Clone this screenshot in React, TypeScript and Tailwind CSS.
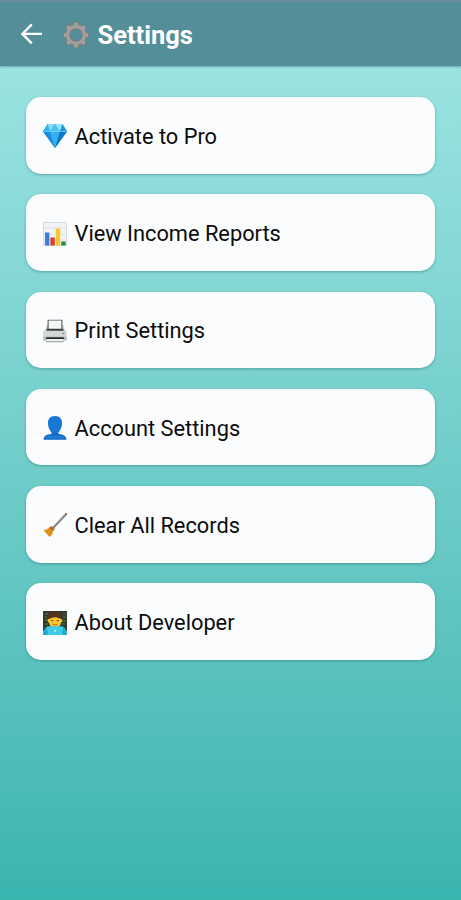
import type { ReactNode } from "react";

function BackArrow() {
  return (
    <svg className="h-6 w-6" viewBox="0 0 24 24" fill="none" stroke="#fff" strokeWidth="2.4">
      <path d="M22 10.900H2.800M11.800 1.400L2.400 10.900l9.400 9.400" />
    </svg>
  );
}

const teeth = [0, 45, 90, 135, 180, 225, 270, 315];

function GearIcon() {
  return (
    <svg className="h-7 w-7" viewBox="0 0 28 28">
      <g fill="#77787a">
        {teeth.map((deg) => (
          <path key={deg} d="M10.700 6l.9-5.200h4.800l.9 5.200z" transform={`rotate(${deg} 14 14)`} />
        ))}
      </g>
      <circle cx="14" cy="14" r="8.200" fill="none" stroke="#77787a" strokeWidth="4.800" />
      <g fill="#a3a09f">
        {teeth.map((deg) => (
          <path key={deg} d="M11.500 7l.7-5.400h3.600l.7 5.400z" transform={`rotate(${deg} 14 14)`} />
        ))}
      </g>
      <circle cx="14" cy="14" r="8.400" fill="none" stroke="#a09e9d" strokeWidth="3.600" />
    </svg>
  );
}

function DiamondIcon() {
  return (
    <svg className="h-6 w-6" viewBox="0 0 24 24">
      <path d="M4.6 0h14.8L24 7.500 12 24 0 7.500z" fill="#1a9ae8" />
      <path d="M4.6 0L7 7.500H0z" fill="#36b0ee" />
      <path d="M4.6 0H12L7 7.500z" fill="#8bdcfb" />
      <path d="M12 0l5 7.500H7z" fill="#4fc2f5" />
      <path d="M12 0h7.4L17 7.500z" fill="#9ce4fd" />
      <path d="M19.4 0L24 7.500h-7z" fill="#2298e2" />
      <path d="M0 7.500h7L12 24z" fill="#168fe0" />
      <path d="M7 7.500h10L12 24z" fill="#35aff0" />
      <path d="M17 7.500h7L12 24z" fill="#0d77cc" />
      <path d="M1 7.500h22" stroke="#7bd4fa" strokeWidth=".8" />
    </svg>
  );
}

function ChartIcon() {
  return (
    <svg className="h-6 w-6" viewBox="0 0 24 24">
      <path d="M.5.5h23v23H.5z" fill="#f2f3f4" stroke="#d7dadd" />
      <path d="M1 6h22M1 12h22M1 18h22" stroke="#d9dde0" strokeWidth=".8" />
      <path d="M2 10.500h4.400v13H2z" fill="#367fdf" />
      <path d="M7.400 15.500h4.400v8H7.400z" fill="#dc3a32" />
      <path d="M12.800 6.500h4.400v17h-4.400z" fill="#f8c52c" />
      <path d="M18.200 19.500h4.400v4h-4.400z" fill="#268c3c" />
    </svg>
  );
}

function PrinterIcon() {
  return (
    <svg className="h-6 w-6" viewBox="0 0 24 24">
      <path d="M3.800 6L2.500 11h19l-1.300-5z" fill="#c4c7c8" />
      <path d="M4.600.8h14.800V11H4.600z" fill="#4c4f51" />
      <path d="M5.600 1.500h12.800V10H5.600z" fill="#f6f8f8" />
      <path d="M2.500 10h19l2.300 2.500v8a1 1 0 01-1 1H1.200a1 1 0 01-1-1v-8z" fill="#d4d7d8" />
      <path d="M4 9.800h16l.8 2H3.200z" fill="#3e4042" />
      <path d="M.4 17.500h23.200v3a1 1 0 01-1 1H1.400a1 1 0 01-1-1z" fill="#b9bdbe" />
      <path d="M3.200 18.300h17.600v2H3.200z" fill="#242628" />
      <path d="M3.800 20h16.400l.6 2.600H3.200z" fill="#f0f2f2" />
      <path d="M3 22.700h18" stroke="#7d8182" strokeWidth=".8" />
      <path d="M19.300 13.800h2.200V15h-2.200z" fill="#7b7f80" />
    </svg>
  );
}

function PersonIcon() {
  return (
    <svg className="h-6 w-6" viewBox="0 0 24 24">
      <path d="M8.500 14h7v4c5 .4 7.800 2 8 5.800H.5C.7 20 3.500 18.400 8.500 18z" fill="#1566c0" />
      <path d="M12 0c4.800 0 7.400 2.900 7 7.800-.3 5.300-3 9.600-7 9.600S5.300 13.100 5 7.800C4.600 2.900 7.200 0 12 0z" fill="#1976d2" />
      <path d="M2 22.500c.8-2.400 3.700-3 7-3.300 1.500.8 4.500.8 6 0 3.300.3 6.200.9 7 3.300z" fill="#1c7bda" />
    </svg>
  );
}

function BroomIcon() {
  return (
    <svg className="h-6 w-6" viewBox="0 0 24 24">
      <path d="M23.200 1L9 16" stroke="#77706b" strokeWidth="2" strokeLinecap="round" />
      <path d="M22.500 1.400L10 14.600" stroke="#b8aaa0" strokeWidth=".7" />
      <path d="M5.500 15l4.300 3.700c.3 2-1.300 4.200-3.300 5.300L.2 16.800c2.300.2 3.800-.4 5.300-1.800z" fill="#e49a19" />
      <path d="M6 16.800l-2.500 3M7.800 18.500l-2.200 3.500" stroke="#b87413" strokeWidth=".8" />
      <path d="M5.500 15l4.300 3.700 2-3-3.300-2.700z" fill="#bd6b22" />
    </svg>
  );
}

function DeveloperIcon() {
  return (
    <svg className="h-6 w-6" viewBox="0 0 24 24">
      <path d="M0 0h24v20H0z" fill="#303c2e" />
      <path d="M2 3h3M2 6h2M20 3h2.500M20 6h3M2 9h3M19 10h4M2 13h3M19 13h3" stroke="#4f8139" />
      <path d="M4.800 9.500C3.800 3 7 .2 12 .2s8.200 2.800 7.200 9.300z" fill="#54331f" />
      <path d="M5.800 8c2-.4 3.400-1.700 6.200-1.700S16.200 7.600 18.200 8c1.600 0 1.400 3.300-.2 3.600-.7 3.900-2.900 5.600-6 5.600s-5.300-1.700-6-5.600C4.400 11.300 4.200 8 5.800 8z" fill="#fbc52d" />
      <path d="M8 9.700h2.200M13.800 9.700H16" stroke="#684323" />
      <path d="M9.600 13.300q2.400 1.500 4.800 0" fill="none" stroke="#84551e" strokeWidth=".8" />
      <path d="M0 24c0-5.500 2-8.500 6.500-8.500h11c4.500 0 6.500 3 6.500 8.500z" fill="#20a9d0" />
      <path d="M3.800 15.500h16.400l-1 8.500H4.800z" fill="#40cae7" />
      <circle cx="12" cy="19.800" r="1.100" fill="#b5f0fa" />
    </svg>
  );
}

type Item = { label: string; icon: ReactNode };

const items: Item[] = [
  { label: "Activate to Pro", icon: <DiamondIcon /> },
  { label: "View Income Reports", icon: <ChartIcon /> },
  { label: "Print Settings", icon: <PrinterIcon /> },
  { label: "Account Settings", icon: <PersonIcon /> },
  { label: "Clear All Records", icon: <BroomIcon /> },
  { label: "About Developer", icon: <DeveloperIcon /> },
];

export default function App() {
  return (
    <div className="flex min-h-screen flex-col bg-linear-to-b from-[#a0e7e5] to-[#3ab5b0] font-[Roboto,sans-serif]">
      {/* App bar */}
      <header className="flex h-[66px] shrink-0 items-center border-t-2 border-[#688c9b] bg-[#548e99] pt-px pl-5 shadow-[0_1px_2px_rgba(30,80,85,0.4)]">
        <button aria-label="Back">
          <BackArrow />
        </button>
        <h1 className="ml-[17.5px] flex items-center gap-2 text-[25.5px] leading-8 font-bold text-white">
          <GearIcon />
          <span className="pt-px">Settings</span>
        </h1>
      </header>

      {/* Menu */}
      <main className="flex flex-col gap-[20.8px] px-[26px] pt-[31px]">
        {items.map((item) => (
          <button
            key={item.label}
            className="flex h-[76.5px] items-center gap-[7.5px] rounded-[15px] bg-[#fafcfe] pt-[2px] pl-[17px] text-left text-[21.8px] text-[#0c0c0c] shadow-[0_1px_3px_rgba(20,90,90,0.4)]"
          >
            {item.icon}
            <span className="pt-[1.5px]">{item.label}</span>
          </button>
        ))}
      </main>
    </div>
  );
}
